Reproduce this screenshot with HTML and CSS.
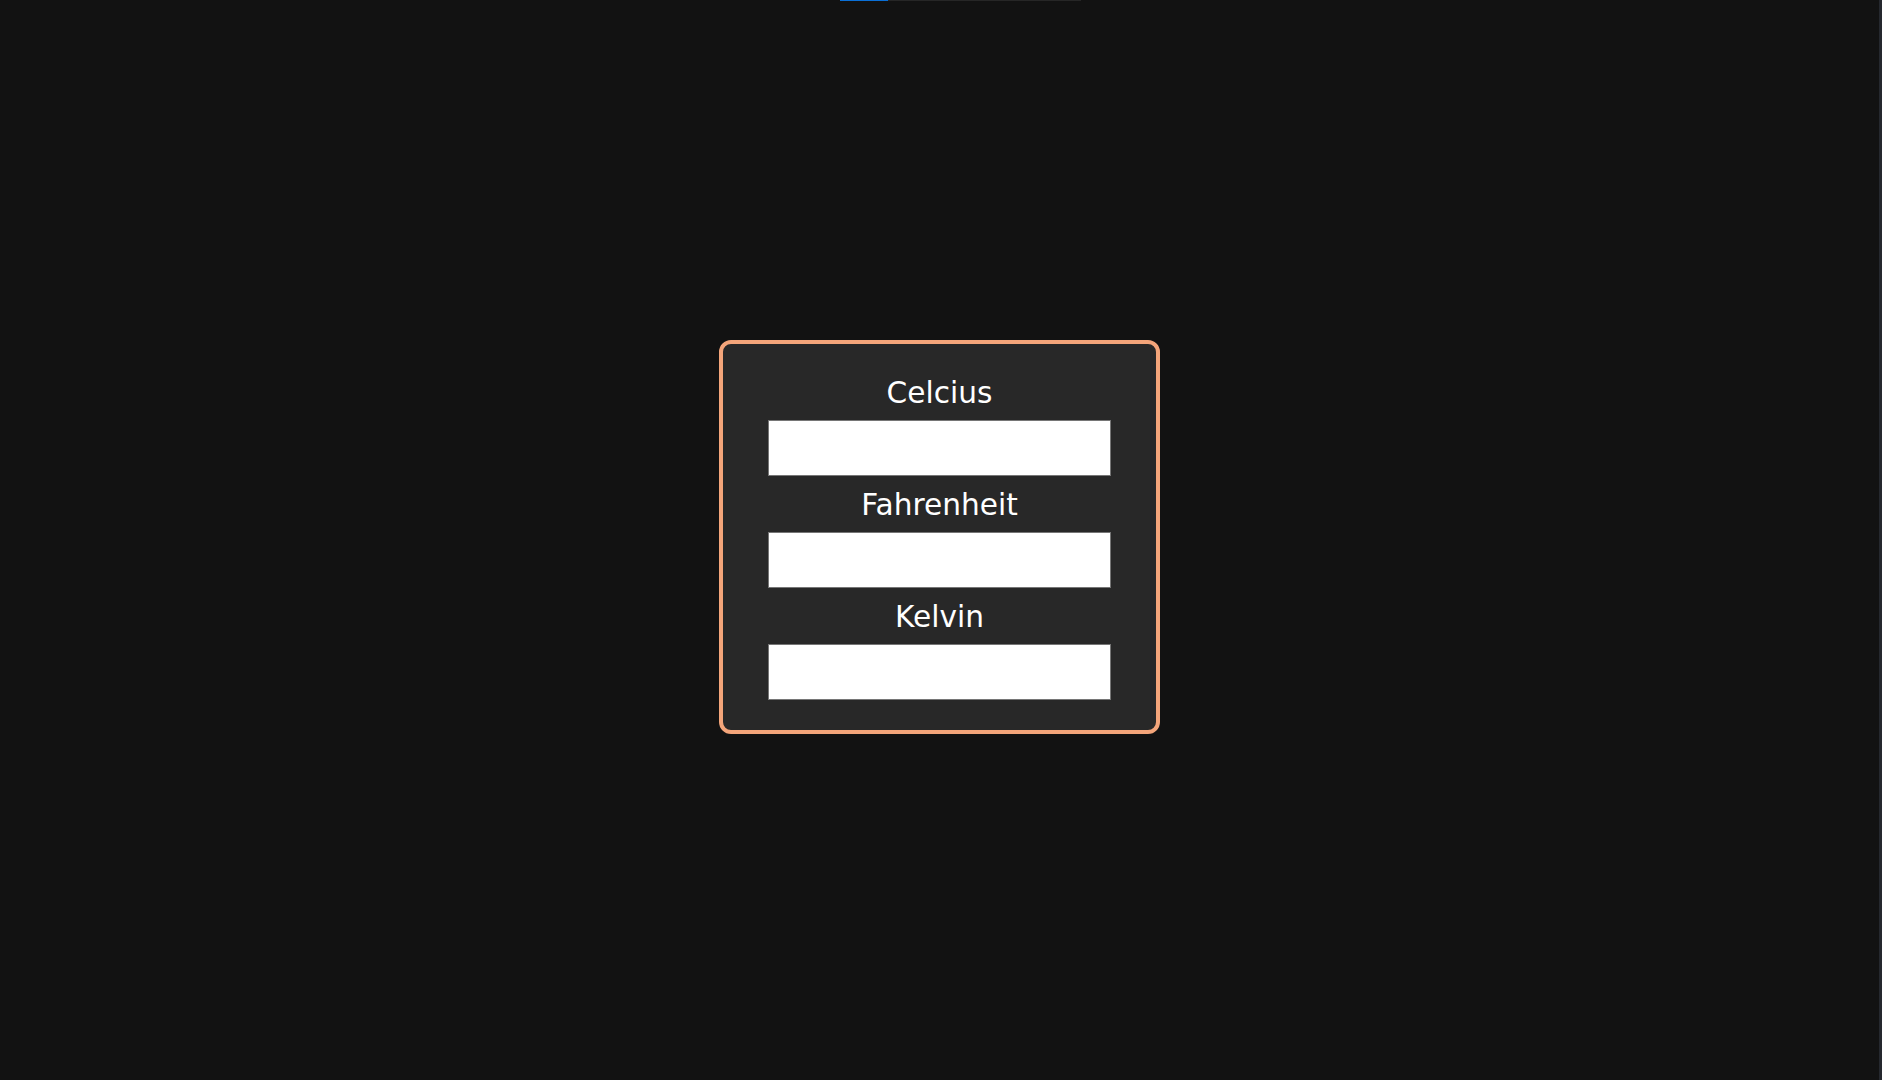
FILE: index.html
```html
<!DOCTYPE html>
<html lang="en">
<head>
<meta charset="utf-8">
<title>Temperature Converter</title>
<link rel="stylesheet" href="styles.css">
</head>
<body>
<div class="page">
  <main class="main">
    <div class="progress"><div class="progress-fill"></div></div>
    <div class="stage">
      <form class="card">
        <label class="field">
          <span class="label">Celcius</span>
          <input class="input" type="text">
        </label>
        <label class="field">
          <span class="label">Fahrenheit</span>
          <input class="input" type="text">
        </label>
        <label class="field">
          <span class="label">Kelvin</span>
          <input class="input" type="text">
        </label>
      </form>
    </div>
  </main>
  <div class="edge"></div>
</div>
</body>
</html>
```
FILE: styles.css
```css
html, body {
  margin: 0;
  height: 100%;
  background: #121212;
}
body {
  font-family: "DejaVu Sans", sans-serif;
  overflow: hidden;
}
.page {
  display: flex;
  height: 1080px;
}
.main {
  flex: 1;
  display: flex;
  flex-direction: column;
}
.edge {
  width: 3px;
  background: #25282e;
}
.progress {
  margin-left: 840px;
  width: 241px;
  height: 1px;
  background: #262626;
  display: flex;
}
.progress-fill {
  width: 48px;
  background: #0a6fd6;
}
.stage {
  flex: 1;
  display: flex;
  align-items: center;
  justify-content: center;
  padding-bottom: 7px;
}
.card {
  box-sizing: border-box;
  width: 441px;
  height: 394px;
  margin: 0;
  border: 4px solid #f4a57a;
  border-radius: 12px;
  background: #282828;
  padding: 32px 45px 18px;
  display: flex;
  flex-direction: column;
}
.field {
  display: flex;
  flex-direction: column;
  align-items: stretch;
  margin-bottom: 12px;
}
.label {
  color: #ffffff;
  font-size: 29.6px;
  line-height: 34px;
  text-align: center;
  margin-bottom: 10px;
}
.input {
  box-sizing: border-box;
  height: 56px;
  width: 100%;
  margin: 0;
  border: 1px solid #767676;
  background: #ffffff;
  padding: 0 8px;
  font-family: inherit;
  font-size: 20px;
  outline: none;
}
```
